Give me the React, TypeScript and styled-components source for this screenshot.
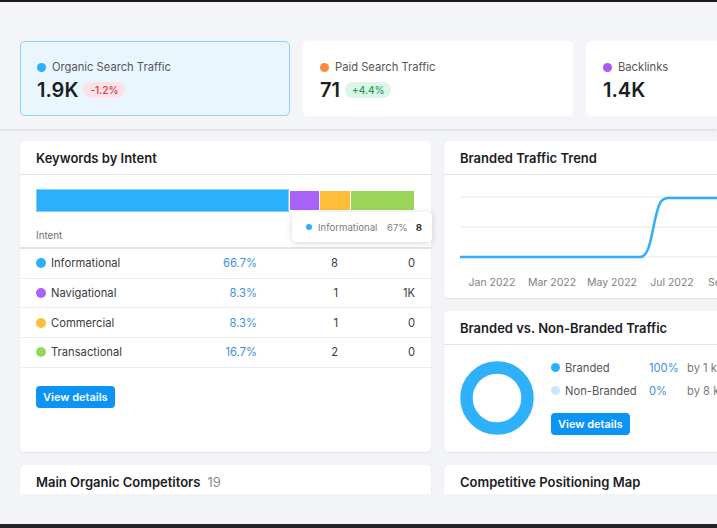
import React from 'react'
import styled, { createGlobalStyle, css } from 'styled-components'

const GlobalStyle = createGlobalStyle`
    body {
        margin: 0;
        background: #f3f4f8;
        font-family: Inter, "Noto Sans", sans-serif;
        color: #1c1c24;
    }
`

const Frame = styled.div`
    width: 717px;
    height: 528px;
    display: flex;
    flex-direction: column;
    border-top: 2px solid #1b1b1d;
    box-sizing: border-box;
    overflow: hidden;
`

const Viewport = styled.div`
    height: 492px;
    overflow: hidden;
    flex-shrink: 0;
`

const Spacer = styled.div`
    flex: 1;
`

const TaskBar = styled.div`
    height: 4px;
    background: #232325;
`

const SummaryStrip = styled.div`
    display: flex;
    gap: 13px;
    padding: 39px 0 13px 20px;
    background: #f4f5f9;
    box-shadow: 0 1px 3px rgba(0, 0, 0, 0.12);
    position: relative;
`

const MetricCard = styled.div<{ $active?: boolean }>`
    flex: 0 0 270px;
    height: 75px;
    box-sizing: border-box;
    padding: 17px 16px 0;
    border-radius: 5px;
    background: white;
    border: 1px solid transparent;
    ${ p => p.$active && css`
        background: #e9f6fe;
        border-color: #8fd0f7;
    ` }
`

const MetricLabel = styled.div`
    display: flex;
    align-items: center;
    gap: 6px;
    font-size: 11.2px;
    line-height: 16px;
    color: #55565c;
`

const Dot = styled.span<{ $color: string, $size?: number }>`
    width: ${ p => p.$size || 9 }px;
    height: ${ p => p.$size || 9 }px;
    border-radius: 50%;
    background: ${ p => p.$color };
    flex-shrink: 0;
`

const MetricValue = styled.div`
    display: flex;
    align-items: center;
    gap: 5px;
    margin-top: 2px;
    font-size: 20px;
    line-height: 26px;
    font-weight: 600;
    color: #1c1c24;
`

const Badge = styled.span<{ $up?: boolean }>`
    font-size: 10px;
    line-height: 16px;
    font-weight: 500;
    padding: 0 7px;
    border-radius: 8px;
    background: ${ p => p.$up ? '#dbf6e7' : '#fbe2e6' };
    color: ${ p => p.$up ? '#1b9b58' : '#d4384f' };
`

const Grid = styled.div`
    display: grid;
    grid-template-columns: 411px 411px;
    grid-template-rows: 157px 141px 60px;
    gap: 13px;
    padding: 12px 20px;
`

const Card = styled.div<{ $tall?: boolean }>`
    background: white;
    border-radius: 5px;
    box-shadow: 0 1px 2px rgba(0, 0, 0, 0.07);
    position: relative;
    ${ p => p.$tall && css`grid-row: span 2;` }
`

const CardHeader = styled.div`
    height: 33px;
    display: flex;
    align-items: center;
    gap: 7px;
    padding: 0 16px;
    border-bottom: 1px solid #e3e4e8;
    font-size: 13px;
    font-weight: 600;
    color: #1c1c24;
`

const Count = styled.span`
    font-weight: 400;
    color: #8a8b90;
`

const CardBody = styled.div`
    padding: 14px 16px 0;
`

const IntentBar = styled.div`
    display: flex;
    align-items: center;
    gap: 1px;
    height: 23px;
`

const Segment = styled.div<{ $color: string, $active?: boolean }>`
    height: ${ p => p.$active ? 23 : 19 }px;
    background: ${ p => p.$color };
    ${ p => p.$active && css`box-shadow: inset 0 0 0 1px #7fd0ff;` }
`

const Tooltip = styled.div`
    position: absolute;
    left: 272px;
    top: 71px;
    width: 140px;
    height: 30px;
    box-sizing: border-box;
    display: flex;
    align-items: center;
    gap: 6px;
    padding: 0 10px 0 14px;
    background: white;
    border-radius: 4px;
    box-shadow: 0 1px 6px rgba(0, 0, 0, 0.16);
    font-size: 9.6px;
    color: #7b7c82;
`

const TipName = styled.span`
    flex: 1;
`

const TipValue = styled.span`
    font-weight: 700;
    color: #2a2b30;
    margin-left: 2px;
`

const Table = styled.div`
    margin-top: 12px;
`

const TableRow = styled.div<{ $header?: boolean }>`
    display: grid;
    grid-template-columns: 1fr 60px 81px 77px;
    align-items: center;
    height: ${ p => p.$header ? 23 : 28.7 }px;
    padding: 0 16px;
    border-bottom: ${ p => p.$header ? '2px solid #e2e3e8' : '1px solid #ececf0' };
    font-size: ${ p => p.$header ? 9.8 : 11.2 }px;
    color: ${ p => p.$header ? '#6b6c72' : '#3a3b40' };
`

const IntentName = styled.span`
    display: flex;
    align-items: center;
    gap: 5px;
`

const Num = styled.span<{ $link?: boolean }>`
    text-align: right;
    color: ${ p => p.$link ? '#3d8fdc' : '#3a3b40' };
`

const HeadCell = styled.span<{ $right?: boolean }>`
    text-align: ${ p => p.$right ? 'right' : 'left' };
`

const Button = styled.button`
    font-family: inherit;
    font-size: 11px;
    font-weight: 600;
    color: white;
    background: #0b94f6;
    border: none;
    border-radius: 4px;
    height: 22px;
    padding: 0 7px;
    cursor: pointer;
`

const ButtonRow = styled.div`
    padding: 17px 16px 0;
`

const ChartBody = styled.div`
    padding: 13px 0 0 16px;
`

const AxisLabels = styled.div`
    display: flex;
    margin: 6px 0 0 2px;
`

const AxisLabel = styled.span`
    flex: 0 0 60px;
    text-align: center;
    font-size: 10.5px;
    color: #808187;
    white-space: nowrap;
`

const SplitBody = styled.div`
    display: flex;
    align-items: flex-start;
    gap: 17px;
    padding: 16px 16px 0;
`

const Legend = styled.div`
    display: flex;
    flex-direction: column;
    margin-top: -5px;
`

const LegendRow = styled.div`
    display: grid;
    grid-template-columns: 98px 38px auto;
    align-items: center;
    height: 23px;
    font-size: 11.2px;
    color: #55565c;
`

const LegendName = styled.span`
    display: flex;
    align-items: center;
    gap: 5px;
`

const LegendPct = styled.span`
    color: #3d8fdc;
`

const LegendBy = styled.span`
    color: #77787e;
    white-space: nowrap;
`

const LegendButton = styled.div`
    margin-top: 10px;
`

const intents = [
    { name: 'Informational', color: '#2bb0fb', pct: '66.7%', kw: '8', traffic: '0', width: 253 },
    { name: 'Navigational', color: '#a862f7', pct: '8.3%', kw: '1', traffic: '1K', width: 29 },
    { name: 'Commercial', color: '#ffbd3a', pct: '8.3%', kw: '1', traffic: '0', width: 30 },
    { name: 'Transactional', color: '#9bd55a', pct: '16.7%', kw: '2', traffic: '0', width: 63 },
]

const months = ['Jan 2022', 'Mar 2022', 'May 2022', 'Jul 2022', 'Sep 2022']

const Donut = () => (
    <svg width="74" height="74" viewBox="0 0 74 74">
        <circle cx="37" cy="37" r="30.5" fill="none" stroke="#2eb0fb" strokeWidth="12.5" />
    </svg>
)

const TrendChart = () => (
    <svg width="400" height="78" viewBox="0 0 400 78">
        <line x1="0" x2="400" y1="9" y2="9" stroke="#e6e7eb" />
        <line x1="0" x2="400" y1="39" y2="39" stroke="#e6e7eb" />
        <line x1="0" x2="400" y1="69" y2="69" stroke="#e6e7eb" />
        <path
            d="M0 69 L180 69 C189 69 191 50 195 32 C199 14 201 10 209 10 L400 10"
            fill="none"
            stroke="#2eaefb"
            strokeWidth="2.5"
        />
    </svg>
)

export default function App() {
    return (
        <Frame>
            <GlobalStyle />
            <Viewport>
                <SummaryStrip>
                    <MetricCard $active>
                        <MetricLabel><Dot $color="#2bb0fb" />Organic Search Traffic</MetricLabel>
                        <MetricValue>1.9K<Badge>-1.2%</Badge></MetricValue>
                    </MetricCard>
                    <MetricCard>
                        <MetricLabel><Dot $color="#ff8b3d" />Paid Search Traffic</MetricLabel>
                        <MetricValue>71<Badge $up>+4.4%</Badge></MetricValue>
                    </MetricCard>
                    <MetricCard>
                        <MetricLabel><Dot $color="#a75cf6" />Backlinks</MetricLabel>
                        <MetricValue>1.4K</MetricValue>
                    </MetricCard>
                </SummaryStrip>

                <Grid>
                    <Card $tall>
                        <CardHeader>Keywords by Intent</CardHeader>
                        <CardBody>
                            <IntentBar>
                                {intents.map((it, i) => (
                                    <Segment key={it.name} $color={it.color} $active={i === 0} style={{ width: it.width }} />
                                ))}
                            </IntentBar>
                        </CardBody>
                        <Table>
                            <TableRow $header>
                                <HeadCell>Intent</HeadCell>
                                <span />
                                <HeadCell $right>Keywords</HeadCell>
                                <HeadCell $right>Traffic</HeadCell>
                            </TableRow>
                            {intents.map(it => (
                                <TableRow key={it.name}>
                                    <IntentName><Dot $color={it.color} $size={10} />{it.name}</IntentName>
                                    <Num $link>{it.pct}</Num>
                                    <Num>{it.kw}</Num>
                                    <Num>{it.traffic}</Num>
                                </TableRow>
                            ))}
                        </Table>
                        <ButtonRow>
                            <Button>View details</Button>
                        </ButtonRow>
                        <Tooltip>
                            <Dot $color="#2bb0fb" $size={6} />
                            <TipName>Informational</TipName>
                            <span>67%</span>
                            <TipValue>8</TipValue>
                        </Tooltip>
                    </Card>

                    <Card>
                        <CardHeader>Branded Traffic Trend</CardHeader>
                        <ChartBody>
                            <TrendChart />
                            <AxisLabels>
                                {months.map(m => <AxisLabel key={m}>{m}</AxisLabel>)}
                            </AxisLabels>
                        </ChartBody>
                    </Card>

                    <Card>
                        <CardHeader>Branded vs. Non-Branded Traffic</CardHeader>
                        <SplitBody>
                            <Donut />
                            <Legend>
                                <LegendRow>
                                    <LegendName><Dot $color="#2bb0fb" />Branded</LegendName>
                                    <LegendPct>100%</LegendPct>
                                    <LegendBy>by 1 keywords</LegendBy>
                                </LegendRow>
                                <LegendRow>
                                    <LegendName><Dot $color="#c8e7fb" />Non-Branded</LegendName>
                                    <LegendPct>0%</LegendPct>
                                    <LegendBy>by 8 keywords</LegendBy>
                                </LegendRow>
                                <LegendButton>
                                    <Button>View details</Button>
                                </LegendButton>
                            </Legend>
                        </SplitBody>
                    </Card>

                    <Card>
                        <CardHeader>Main Organic Competitors<Count>19</Count></CardHeader>
                    </Card>
                    <Card>
                        <CardHeader>Competitive Positioning Map</CardHeader>
                    </Card>
                </Grid>
            </Viewport>
            <Spacer />
            <TaskBar />
        </Frame>
    )
}
